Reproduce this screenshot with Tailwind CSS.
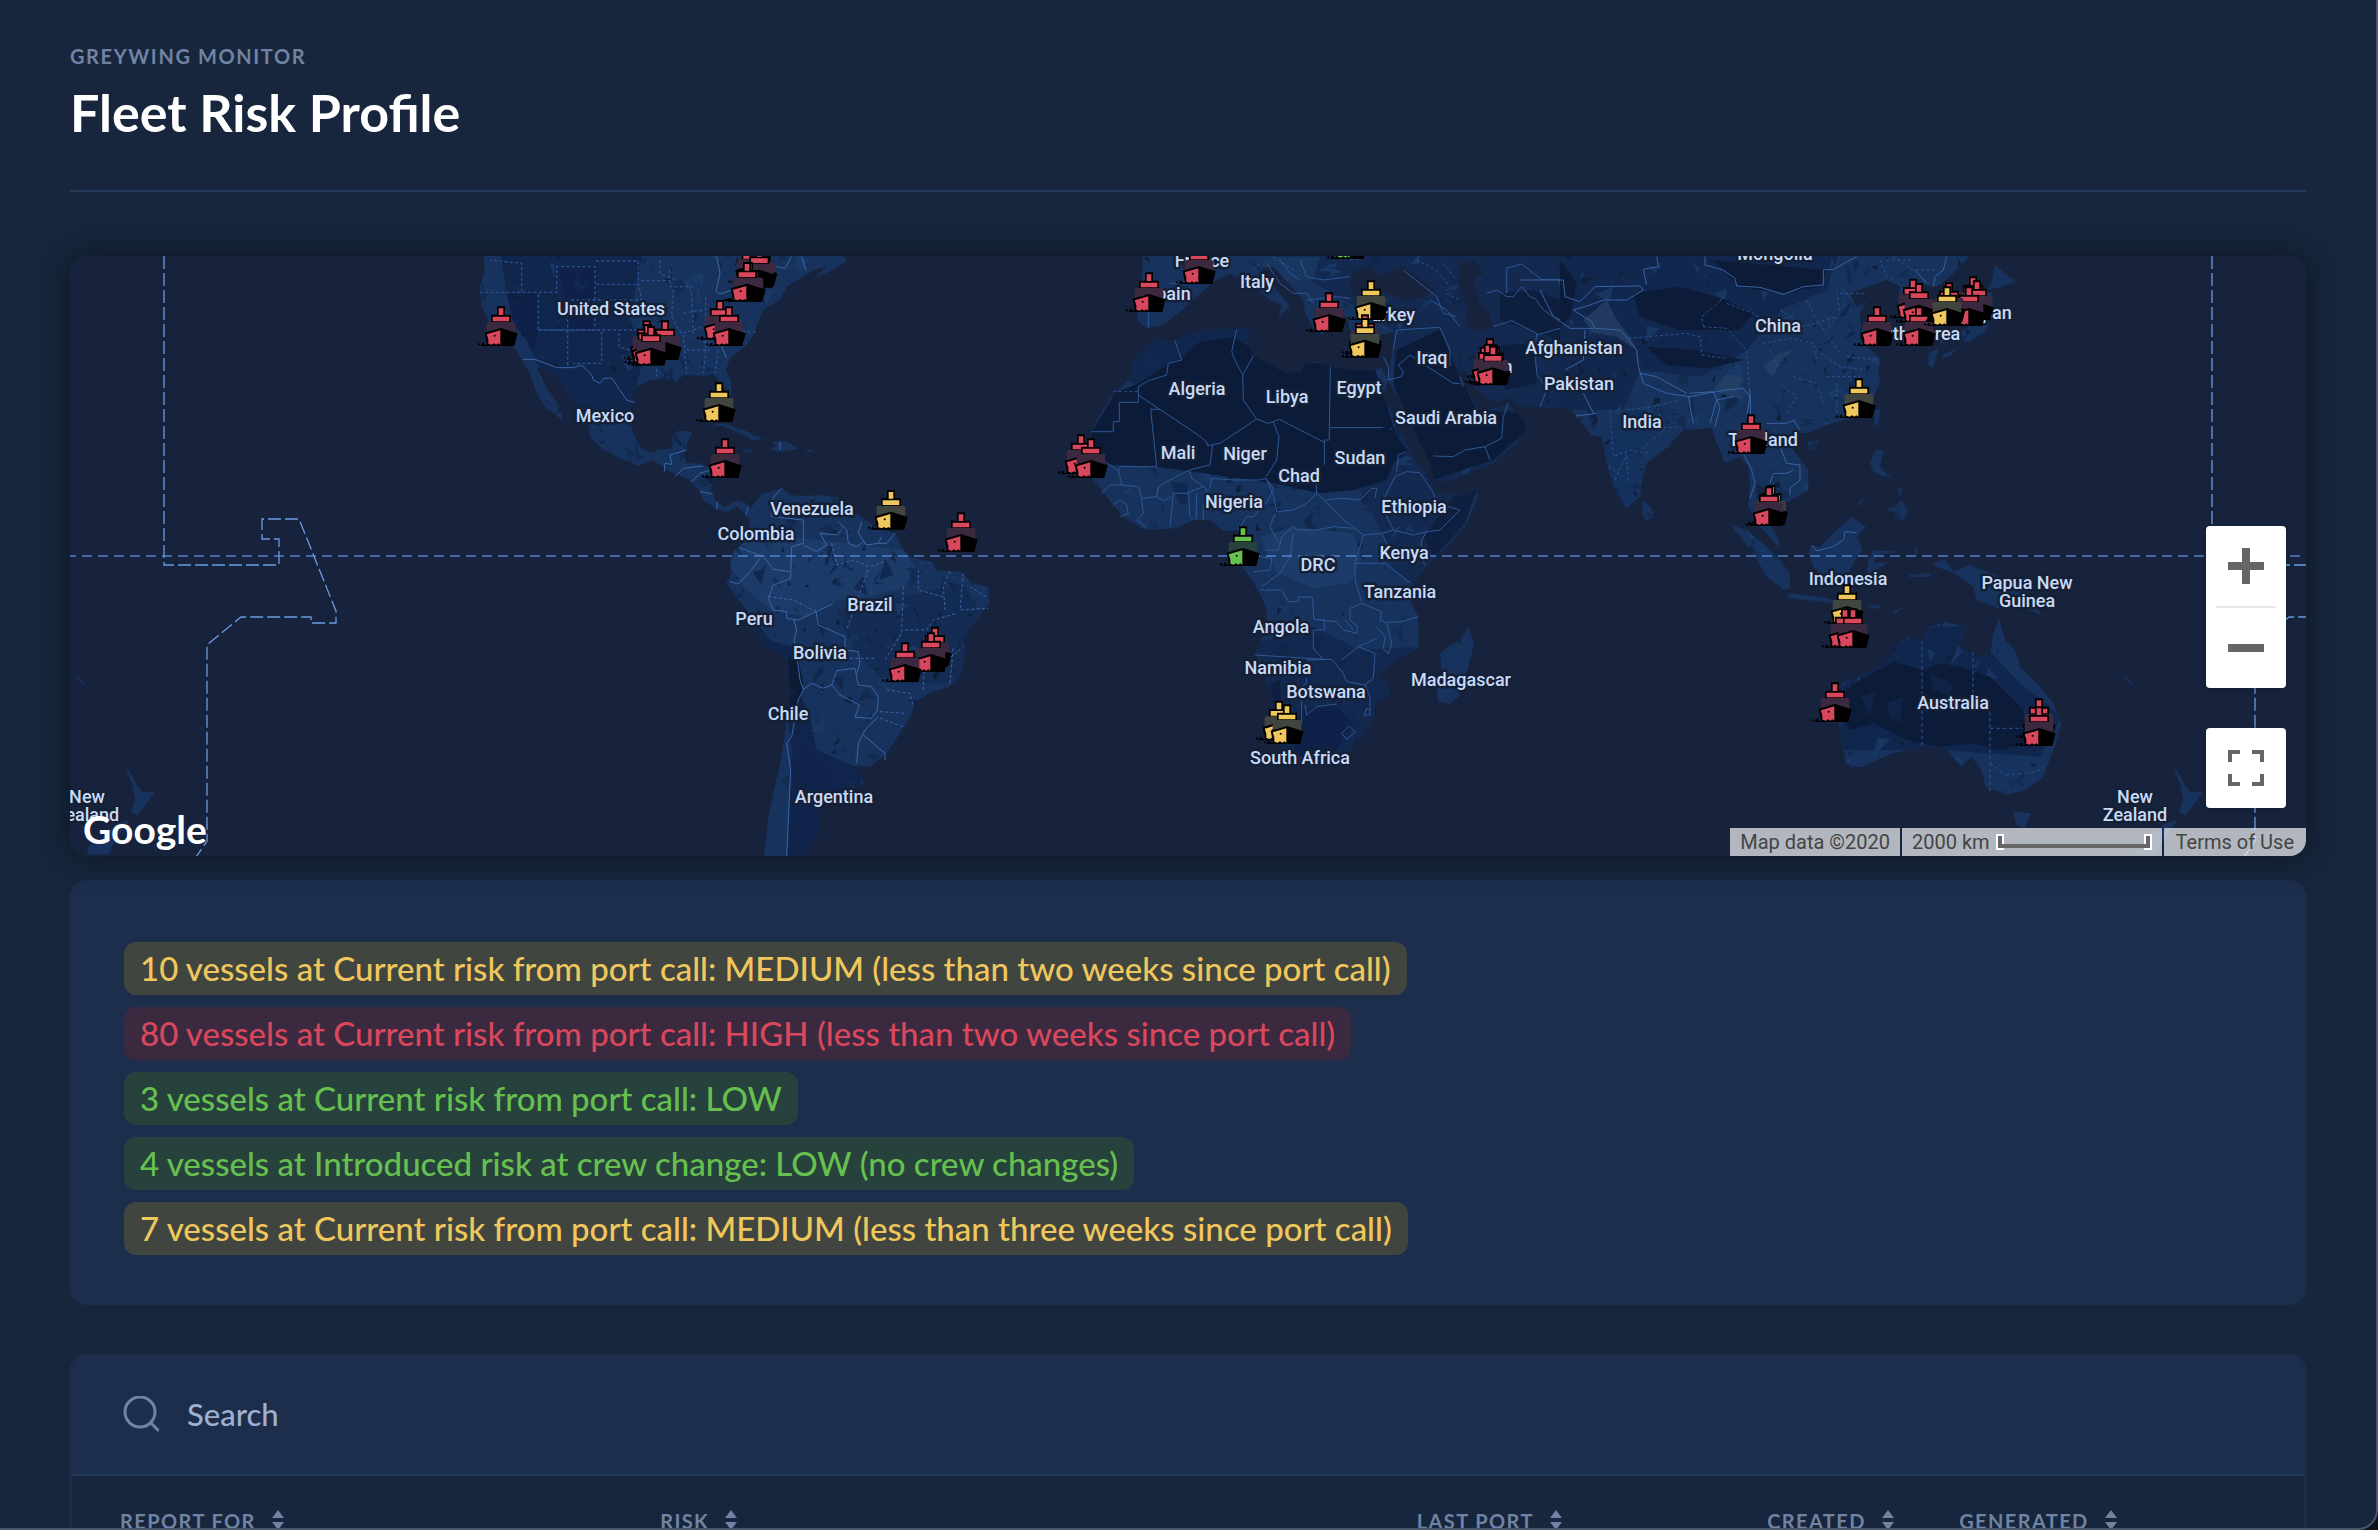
<!DOCTYPE html>
<html lang="en">
  <head>
    <meta charset="UTF-8" />
    <meta name="viewport" content="width=device-width, initial-scale=1.0" />
    <title>Fleet Risk Profile</title>
    <script src="https://cdn.jsdelivr.net/npm/@tailwindcss/browser@4"></script>
  </head>
  <body class="bg-[#0b121c] font-['Lato','Open_Sans',sans-serif]">
    <div class="h-screen overflow-hidden rounded-br-[20px] border-r-2 border-b-2 border-[#49566b] bg-[#17263c] px-[70px]">
      <header class="border-b-2 border-[#243b5b] pt-[42px] pb-12">
        <p class="text-[20px] leading-7 font-bold tracking-[0.08em] text-[#7183a3] uppercase">Greywing Monitor</p>
        <h1 class="mt-3 text-[52px] leading-[60px] font-bold text-white">Fleet Risk Profile</h1>
      </header>

      <!-- map -->
      <section aria-label="Fleet map" class="relative mt-16 h-[600px] overflow-hidden rounded-2xl bg-[#17233d] shadow-[0_0_32px_#0c1624]">
        <svg class="block h-full w-full" viewBox="0 0 2236 600" preserveAspectRatio="xMidYMid slice">
          <defs>
            <g id="ship">
              <path d="M-12 -119H12V-94H30V-70H-30V-94H-12Z" fill="#000" />
              <path d="M-7 -113H7V-93H-7ZM-25 -88H25V-74H-25Z" fill="currentColor" />
              <rect x="-43" y="-72" width="86" height="60" rx="5" fill="var(--body)" />
              <path d="M-49 -40L0 -54 50 -38 40 0H-62L-58 -4H-42Z" fill="#000" />
              <path d="M-43 -35L-2 -47V-4L-8 -8 -14 -4 -21 -8 -28 -4 -38 -7 -38 -20Z" fill="currentColor" />
              <circle cx="-19" cy="-31" r="3" fill="#000" />
              <circle cx="-66" cy="-5" r="3.500" fill="#000" />
              <circle cx="-54" cy="-6" r="4" fill="#000" />
            </g>
            <path id="land-am" d="M38 0L45 60 30 110 35 170 60 220 75 265 130 290 155 328 180 370 200 430 225 470 280 512 262 460 235 420 215 385 200 350 225 360 265 385 290 430 330 480 355 520 360 560 400 600 450 625 505 648 548 630 600 665 660 690 690 725 700 750 740 778 775 785 800 768 822 790 840 810 830 870 790 905 780 940 785 970 770 1000 795 1040 825 1080 850 1140 890 1190 940 1215 955 1240 960 1335 936 1512 897 1689 882 1818H1005L1050 1737 1044 1677 1134 1632 1182 1596 1158 1548 1200 1550 1250 1510 1290 1450 1322 1400 1335 1355 1390 1325 1430 1315 1470 1280 1485 1220 1490 1150 1520 1110 1558 1060 1555 1010 1510 1000 1470 965 1400 960 1385 935 1330 925 1300 900 1275 850 1215 830 1175 800 1130 770 1110 745 1060 735 1000 738 960 735 935 715 880 730 865 745 842 775 830 760 795 752 765 772 735 750 722 720 728 690 722 655 690 640 650 640 640 610 668 545 625 542 608 560 605 595 565 600 540 610 510 590 490 550 480 510 485 450 500 410 540 390 590 385 620 395 640 375 700 378 730 372 760 405 783 440 785 400 768 360 780 325 820 295 850 260 862 220 880 180 930 150 950 110 1000 80 1030 60 1070 50 1030 85 1085 62 1132 30 1100 0ZM712 530L760 518 820 540 885 568 850 570 800 545 760 528ZM905 575L950 573 985 597 920 605 900 595 920 590ZM818 598H845L850 608 830 606ZM1008 599H1030V605H1010Z" />
            <path id="land-af" d="M285 262L310 275 345 272 375 255 440 240 530 237 567 235 565 280 580 318 620 335 675 370 725 365 735 340 775 335 810 350 870 360 940 360 965 355 985 390 968 440 985 470 1010 520 1030 560 1050 610 1090 660 1115 700 1125 728 1180 730 1255 715 1250 750 1220 820 1180 875 1130 920 1090 960 1060 1000 1055 1060 1075 1100 1075 1190 1020 1225 950 1280 985 1300 988 1335 945 1360 945 1395 900 1470 860 1510 790 1525 720 1540 680 1545 660 1510 655 1470 635 1390 632 1330 600 1250 590 1200 622 1130 620 1080 600 1030 575 990 545 950 525 900 550 850 530 842 490 843 450 810 400 810 350 835 255 840 190 800 155 760 125 720 100 690 90 640 85 600 95 545 110 510 160 430 215 385 215 340 250 300ZM1225 1130L1243 1180 1225 1250 1195 1340 1170 1362 1135 1355 1130 1320 1145 1270 1140 1210 1180 1180 1205 1165ZM250 0L245 100 235 150 230 210 260 235 310 225 355 190 400 150 460 95 510 72 545 85 580 110 630 150 665 165 655 205 690 170 655 125 625 90 605 55 640 50 690 105 730 150 735 190 760 235 790 255 800 215 830 190 860 200 870 240 900 250 960 255 1000 245 1000 290 990 350 985 390 1000 420 1040 500 1080 580 1110 640 1125 700 1170 690 1300 640 1370 580 1405 525 1380 500 1345 460 1310 475 1260 480 1245 460 1210 400 1190 370 1215 360 1250 420 1310 460 1345 440 1380 470 1540 475V0Z" />
            <path id="land-as" d="M60 0V475H90L110 500 155 555 185 560 200 640 225 720 260 775 300 740 308 680 320 640 385 590 430 540 515 535 530 580 555 640 600 620 625 650 630 700 625 770 660 830 720 895 712 860 680 800 650 740V700L690 725 720 760 745 755 805 720V660L760 600 735 570 760 545 800 550 860 525 930 505 1000 440 1020 400 1015 360 1020 330 970 270 965 235 960 190 985 150 950 170 930 130 980 110 1040 90 1080 110 1075 150 1090 200 1110 260 1150 250 1140 180 1110 130 1130 100 1190 110 1230 80 1280 30 1300 0ZM1365 45L1400 75 1428 95 1385 110 1340 120 1355 95ZM1355 125L1360 170 1340 240 1290 275 1200 280V265L1280 235 1320 190 1340 130ZM1165 310L1195 295 1180 355 1165 345ZM1205 315L1250 295 1235 315 1210 325ZM1005 480L1022 475 1015 520 1000 530ZM805 575L835 570 820 600 803 595ZM1005 600H1030L1020 650 1055 685 1030 680 1000 665 990 640ZM950 765L985 725 960 765ZM1070 705L1085 720 1080 740ZM1035 780L1065 770 1085 750 1104 785 1085 812 1065 805V785ZM310 752L335 775 340 800 318 812 306 790ZM570 823L620 840 680 890 720 930 750 970V1015L730 1018 680 980 640 910 600 860ZM740 1030L800 1035 870 1045 890 1060 800 1050 750 1045ZM935 800L978 830 950 860 968 900 940 940 920 985 850 980 820 950 805 905 815 885 840 890 880 850ZM1000 900L1075 905 1010 915 1000 940 1045 935 1010 960 1020 1000 980 975 985 930ZM1125 885L1135 910 1125 915ZM1105 975L1170 970 1175 980 1110 982ZM985 1065L1030 1068 1000 1078ZM1055 1085L1100 1068 1065 1092ZM1180 940L1215 928 1240 965 1290 945 1370 975 1450 1010 1505 1095 1440 1070 1370 1075 1310 1050 1300 1010 1240 970 1190 950ZM905 1300L960 1275 1025 1250 1060 1190 1105 1160 1140 1180 1170 1130 1215 1115 1278 1130 1260 1190 1310 1220 1350 1215 1360 1150 1378 1105 1395 1170 1425 1200 1440 1250 1500 1310 1540 1360 1564 1420 1545 1490 1509 1580 1460 1620 1398 1635 1337 1610 1325 1560 1294 1520 1264 1550 1215 1495 1147 1490 1056 1510 970 1550 921 1550 909 1490 896 1410ZM1419 1685L1474 1690 1453 1735 1429 1725Z" />
            <path id="land-nz" d="M1900 1555L1915 1565 1931 1600 1950 1625 1989 1625 1965 1660 1937 1695 1918 1685 1930 1650 1920 1600ZM1913 1710L1876 1720 1830 1765 1784 1790 1790 1815 1851 1812 1870 1770ZM1747 1275L1788 1307 1765 1298Z" />
            <path id="dateline" d="M94 0V309H209V283H192V263H229L266 355V367H241V361H171L137 389V585L124 604" />
            <clipPath id="clip-am"><use href="#land-am" /></clipPath>
            <clipPath id="clip-af"><use href="#land-af" /></clipPath>
            <clipPath id="clip-as"><use href="#land-as" /></clipPath>
          </defs>

          <!-- Americas -->
          <g transform="translate(400 -6) scale(0.33333)">
            <use href="#land-am" fill="#17325c" />
            <g clip-path="url(#clip-am)">
              <path d="M90 0L110 130 150 230 200 340 330 480 480 500 500 400 520 330 480 200 520 0Z" fill="#11264d" />
              <path d="M110 130H205V235L190 300 130 220ZM265 50H380V240H290V160Z" fill="#0f2148" />
              <path d="M1100 1080L1300 1040 1480 1000 1540 1100 1480 1300 1250 1300 1150 1200Z" fill="#142b54" />
              <path d="M800 880L960 860 1300 900 1340 960 1300 1010 1200 1040 1100 1050 1000 1100 900 1080 830 1020 780 950Z" fill="#1c3b69" />
              <path d="M770 1000L830 1080 900 1170 965 1190 990 1330 1020 1400 1040 1500 1180 1560 1160 1650 1060 1818H950L965 1500 930 1220 850 1170Z" fill="#11244c" />
              <path d="M955 1220L985 1230 1000 1300 985 1400 958 1380Z" fill="#0d1a34" />
              <g data-terrain="3 10 1550 10 1800 900"></g>
              <path d="M990 1500L1040 1520 1110 1660 1040 1818H960Z" fill="#10234b" />
            </g>
            <g fill="none" stroke="#3c66a8" stroke-width="3" stroke-linejoin="round">
              <path d="M157 328H195L260 353H310L335 345 365 375 370 390 390 400 402 385 425 384 470 450 495 458M740 20L750 70 738 125 750 132 800 115M995 20L1008 62M920 50L945 55 965 20M755 290L770 325M583 665L585 640 605 643 600 615 650 600M615 680L640 655 700 648M664 695L690 670 722 660M690 725L728 732M740 778L742 755M828 795L835 772" />
              <path d="M935 715L908 745 905 800 1000 810V880L965 890 962 985 910 1005 895 1045 910 1080 950 1085 950 1105 985 1110 1038 1085 1090 1060M808 893L880 920 910 958 960 965M870 925L840 965 805 1002 780 995M1038 1085L1045 1125 1125 1160V1200L1165 1205 1170 1240 1160 1270M972 1110L980 1140 972 1170 985 1250 990 1290 1000 1318 1025 1300 1060 1315 1085 1305 1100 1262 1155 1255 1165 1305 1205 1310 1225 1340 1222 1380 1205 1405 1155 1402 1168 1365 1110 1335 1085 1305M1225 1400L1185 1440 1165 1480 1160 1540M1180 1455L1245 1510V1530M1000 1320L985 1350 965 1460 950 1480 962 1560 950 1818M1105 815L1130 840 1135 880 1160 890 1180 875 1190 885 1225 880 1235 860M1050 850L1100 855 1115 840M1050 850L1070 885 1040 905 1000 885M1175 815L1165 850 1190 885M1275 850L1250 880 1225 880M930 575V600" />
              <path stroke-width="4" stroke="#2c5190" stroke-dasharray="9 7" d="M30 127H260V50H375V240H205V127M155 125V40L60 30M293 160V350M205 240H510M395 245V340H310M447 250V290L480 300M378 33H505V100L515 150H293M378 103H500M513 92H600M600 60V110H670M570 30V70L620 90M610 120L605 200 640 260 650 370M665 130L670 260M707 140V300L700 370M745 300L735 370M650 300H720M700 278L830 280M720 245H860M640 250L700 230M755 290L800 240M560 340V380M640 190L700 180" />
              <path stroke-dasharray="9 7" d="M895 1040L970 1050 1040 1085M1195 960L1165 1040 1130 1140M1300 1010L1295 1150 1245 1230M1345 960V1020L1420 1040M1440 965L1420 1010 1425 1080M1480 970L1470 1080 1555 1075M1500 1010L1555 1045M1305 1140H1370L1390 1110 1460 1090M1085 880L1100 945 1150 930 1200 950 1240 935M1360 1320V1270L1420 1240 1480 1190M1250 1320L1320 1330 1330 1370M1230 1385L1310 1390M1230 1405L1300 1430M1140 1225H1220M1440 1300L1450 1190" />
            </g>
          </g>

          <!-- Europe, Africa and the Middle East -->
          <g transform="translate(990 -6) scale(0.33333)">
            <use href="#land-af" fill="#17325c" />
            <g clip-path="url(#clip-af)">
              <path d="M200 0H1600V730H1000L1000 240 600 0Z" fill="#13294f" />
              <path d="M210 340L290 250 600 230V400H210Z" fill="#11264d" />
              <path d="M900 720L1040 620 1130 700 1260 700 1180 900 1060 1000 1000 960 960 840Z" fill="#13294f" />
              <path d="M590 1180L760 1130 900 1200 1060 1190 1000 1300 900 1520H660Z" fill="#12284f" />
              <path d="M720 1380L820 1360 880 1420 830 1500 700 1520Z" fill="#0f2148" />
              <g data-terrain="11 10 1540 10 1540 420"></g>
              <path d="M80 640L95 545 165 430 235 400 330 340 370 320 420 275 520 262 600 310 675 365 735 335 945 358 985 480 1010 560 1045 605 1000 640 980 690 880 720 780 730 640 700 400 665 290 650Z" fill="#0b1b38" />
              <path d="M1000 400L1010 300 1140 240 1200 380 1250 480 1390 490 1400 540 1300 630 1120 690Z" fill="#0b1b38" />
              <path d="M1320 130L1420 120 1550 170V290L1440 250 1320 210ZM1250 290L1420 280 1430 400 1340 420Z" fill="#0d1e3e" />
              <path d="M1180 740L1250 720 1215 820 1120 920 1090 860Z" fill="#0e1f40" />
              <path d="M632 1300L660 1290 665 1400 640 1390Z" fill="#0e1f40" />
              <path d="M600 860L700 830 880 850 905 930 870 1000 760 1015 650 970Z" fill="#1c3b69" />
              <path d="M640 100L760 90 780 20 600 20Z" fill="#193660" />
              <path d="M865 110L880 60 930 50 960 75 1000 60 1030 50 1070 80 1120 115 1100 140 1040 150 960 125 890 145ZM1200 40L1240 30 1270 70 1240 90 1255 150 1290 190 1300 235 1260 245 1215 225 1225 170 1195 110Z" fill="#17233d" />
              <path d="M1215 700L1245 718 1225 735 1130 730 1100 690Z" fill="#17233d" opacity="0.6" />
            </g>
            <g fill="none" stroke="#2f5796" stroke-width="3" stroke-linejoin="round">
              <path d="M345 272L365 330 325 340 320 375 265 392 235 410V457H178V515H160V545H95M235 435L410 552 440 575 442 587 480 580 590 507 625 520 658 508 793 577M530 237L515 305 525 330 548 375 550 450 590 507M580 318L548 375M811 350L808 533H970M808 533V570H793V645M272 478L290 650H183L175 662 135 635M272 478H300M640 515L657 560 650 630 618 680M458 585L450 645 388 660 330 690 295 710 290 740 245 745 235 710 185 705 175 660M388 660L395 685 435 712 445 740 430 760V808M450 715L455 685 520 690 600 690 618 685 640 715 625 750 580 800 560 800 535 840M385 730L390 800 400 810M410 730L408 810M340 730L330 830M340 730H380L430 710M295 710L290 740 310 752 335 740M160 765L180 750 200 765 205 790 180 800M245 745L250 790 230 810 257 830M125 730L150 705H185M618 685L640 735 650 785 700 780 740 760 770 730 793 750 850 745 900 750 935 715 950 715 945 745M770 730L768 700 780 690M793 750L850 810 880 830 910 855 900 890 885 940 885 990 905 1055M645 790L630 830 660 885 655 900 610 900M700 830L710 840 770 840 820 830 880 835M700 830L665 860 660 885M700 850L690 920 660 970 605 1010M600 1020H665L685 1055 715 1055V1040L757 1042 762 1108 793 1110V1140H760V1195L790 1228 585 1215M762 1108L830 1115 850 1140 890 1150 893 1130 870 1110V1075L905 1060 965 1085 960 1110 980 1120 995 1180 985 1212 970 1195 975 1160 950 1130M980 1117L1025 1115 1075 1100M895 1190L950 1165M845 1230L895 1190 945 1210 940 1285 915 1305 860 1295 850 1270 815 1228 740 1230M740 1285V1300L725 1310V1420M735 1365L740 1395 770 1370 830 1362M915 1305L930 1340V1395L912 1395 920 1375 930 1380M845 1450L868 1428 885 1445 860 1468ZM885 940H975L1050 998M910 855L965 850 1000 840 1060 855 1100 845 1085 870 1082 920 1095 945M965 850L980 880 970 935M1000 838L970 780 975 740 1005 680 1040 665 1080 668 1118 725M1010 665L1015 615 1040 605M1118 725L1130 760 1200 780 1140 840 1100 845M855 1110L880 1140M580 965L630 960 635 925 600 920" />
              <path d="M985 390L1025 380 1030 365 1015 345 1050 315 1110 355 1180 400 1200 400M970 320L985 350 985 390M1000 300L1010 240 1140 232 1170 300 1170 350M1340 130V55L1385 42 1420 70 1445 88H1495L1512 130 1566 135M1280 130L1310 120 1340 140 1360 140 1385 110 1410 140 1425 145 1450 180 1480 200 1525 220 1500 235 1430 255M1300 230L1355 212 1430 250 1425 300 1430 370 1460 420 1440 470M1525 220L1555 235M1345 460L1330 500 1325 565 1275 590 1290 630M1275 590L1215 600 1180 620 1120 618M1200 380L1210 410M620 40L660 100 700 130 740 130 760 160M720 30L740 80 790 90 870 80M660 30L690 70 720 90M740 150L830 140 870 145M1030 60L1080 100 1130 140 1150 190 1190 200M1110 150L1160 180 1200 230M265 185V235M400 100H330" />
              <path stroke-dasharray="9 7" stroke="#2c5190" d="M160 425H235M990 540L1040 480M640 20L700 60M1070 30L1130 60 1170 110M1150 40L1190 90M1160 130L1200 150M580 60L600 40M260 120H330M870 30L910 25" />
            </g>
          </g>

          <!-- Asia and Oceania -->
          <g transform="translate(1470 -6) scale(0.33333)">
            <use href="#land-as" fill="#17325c" />
            <g clip-path="url(#clip-as)">
              <path d="M60 0H900L860 120 720 180 620 300 560 340 480 380 300 360 250 480 60 480Z" fill="#12274e" />
              <path d="M905 1310L1060 1190 1180 1130 1280 1130 1440 1300 1564 1400 1500 1520 1200 1500H900Z" fill="#11264d" />
              <path d="M180 560L260 480 400 480 300 620 280 760H220Z" fill="#14305c" />
              <g data-terrain="23 60 1320 10 900 420"></g>
              <g data-terrain="31 900 1560 1120 1640 90"></g>
              <path d="M280 130L420 110 560 150 640 190 600 240 420 240 300 200ZM520 30L740 50 860 60 840 110 720 130 600 110ZM320 290L470 300 610 330 500 355 380 345ZM60 30L110 100 90 200 60 230Z" fill="#0b1b38" />
              <path d="M960 1290L1060 1235 1150 1260 1200 1240 1260 1250 1350 1280 1450 1380 1460 1480 1380 1500 1300 1480 1200 1490 1100 1470 1000 1420 930 1440 905 1400 920 1320Z" fill="#0b1b38" />
              <path d="M520 420L560 370 610 385 590 420 610 450 570 440ZM670 350L720 310 760 300 720 340 700 380ZM130 210L200 150 230 210 270 260 290 300 230 260 160 250Z" fill="#2a4368" opacity="0.7" />
              <path d="M1170 1270L1240 1300 1230 1340 1180 1320ZM1040 1360L1090 1340 1080 1420 1050 1400ZM960 1340L1010 1320 990 1400Z" fill="#11264d" opacity="0.7" />
            </g>
            <g fill="none" stroke="#3963a4" stroke-width="3" stroke-linejoin="round">
              <path d="M-60 90H70L75 140 120 155 165 110 300 108 310 120 260 150 190 150 150 165 100 180 155 215 165 235 240 240 265 270 290 300 295 350 310 400 380 430 450 440 500 430 560 420 610 415 630 440 620 500M310 60L320 105M350 20L355 50 310 58M495 20V45L550 60 585 85 590 108 660 112 730 133 790 110 850 105V60L880 58 950 20M0 120L40 200 90 235 160 235M135 240L130 330 75 360M300 370L350 380 440 430M445 440L460 520M450 430L520 425 540 470 525 530M108 498L170 490M160 490L130 430M630 420L632 500M680 520L740 520 765 510M680 560L720 590 740 640 780 645V690L750 715V735M690 700L700 670 740 670 760 660M610 610L635 660 645 700 630 745M510 520L530 450 580 440M760 510L780 540M815 885L830 903 880 890 910 870 915 845 950 848M1220 20L1210 60 1185 80 1180 110M1125 60L1160 100" />
              <path stroke="#2c5190" stroke-dasharray="9 7" d="M265 265L440 250 480 260 485 315 560 325M490 230L485 200 545 150M490 230L560 235 620 300 630 440M560 160L640 190 700 230M540 150L555 140M670 280L750 265 820 280 830 330M720 180L790 230 890 200M800 150L830 210 900 310M890 125L900 190 860 240M830 300L900 350 980 360M760 380L830 400 850 460M720 400L770 440 740 490M890 400V500M900 130H970M1020 30L1040 80 1060 90M1060 20L1120 60 1190 60M690 300L720 360M210 480L220 620 270 600 330 610M260 480L340 470 420 450M350 460L370 540 300 600M225 690L260 610 265 700M205 650L250 680M290 540L410 530M1040 30H1120M920 320L1010 330M860 380L960 380" />
              <path stroke-width="4" stroke="#234a86" stroke-dasharray="11 8" d="M1146 1172V1490M1299 1205V1378M1350 1385V1625M1350 1435H1450M1350 1540L1400 1575 1490 1565 1510 1550" />
            </g>
            <use href="#land-nz" fill="#17325c" />
            <use href="#land-nz" x="-6144" fill="#17325c" />
          </g>

          <!-- equator and date line -->
          <g fill="none">
            <path d="M-4 300H2240" stroke="#5a8ee0" stroke-opacity="0.65" stroke-width="2" stroke-dasharray="10 6" />
            <g stroke="#6c9ae2" stroke-width="1.300" stroke-dasharray="13 4">
              <use href="#dateline" />
              <use href="#dateline" x="2048" />
            </g>
          </g>

          <!-- country names -->
          <g class="font-['Roboto',sans-serif] text-[18px] font-medium" fill="#c9daf6" stroke="#142036" stroke-width="5" stroke-linejoin="round" paint-order="stroke" text-anchor="middle">
            <text x="541" y="59">United States</text>
            <text x="535" y="166">Mexico</text>
            <text x="742" y="259">Venezuela</text>
            <text x="686" y="284">Colombia</text>
            <text x="684" y="369">Peru</text>
            <text x="800" y="355">Brazil</text>
            <text x="750" y="403">Bolivia</text>
            <text x="718" y="464">Chile</text>
            <text x="764" y="547">Argentina</text>
            <text x="1132" y="11">France</text>
            <text x="1187" y="32">Italy</text>
            <text x="1098" y="44">Spain</text>
            <text x="1318" y="65">Turkey</text>
            <text x="1362" y="108">Iraq</text>
            <text x="1427" y="117">Iran</text>
            <text x="1127" y="139">Algeria</text>
            <text x="1217" y="147">Libya</text>
            <text x="1289" y="138">Egypt</text>
            <text x="1376" y="168">Saudi Arabia</text>
            <text x="1108" y="203">Mali</text>
            <text x="1175" y="204">Niger</text>
            <text x="1290" y="208">Sudan</text>
            <text x="1229" y="226">Chad</text>
            <text x="1164" y="252">Nigeria</text>
            <text x="1344" y="257">Ethiopia</text>
            <text x="1334" y="303">Kenya</text>
            <text x="1248" y="315">DRC</text>
            <text x="1330" y="342">Tanzania</text>
            <text x="1211" y="377">Angola</text>
            <text x="1208" y="418">Namibia</text>
            <text x="1256" y="442">Botswana</text>
            <text x="1391" y="430">Madagascar</text>
            <text x="1230" y="508">South Africa</text>
            <text x="1705" y="4">Mongolia</text>
            <text x="1708" y="76">China</text>
            <text x="1504" y="98">Afghanistan</text>
            <text x="1509" y="134">Pakistan</text>
            <text x="1572" y="172">India</text>
            <text x="1693" y="190">Thailand</text>
            <text x="1841" y="84">South Korea</text>
            <text x="1917" y="63">Japan</text>
            <text x="1778" y="329">Indonesia</text>
            <text x="1957" y="333">Papua New<tspan x="1957" dy="18">Guinea</tspan></text>
            <text x="1883" y="453">Australia</text>
            <text x="2065" y="547">New<tspan x="2065" dy="18">Zealand</tspan></text>
            <text x="17" y="547">New<tspan x="17" dy="18">Zealand</tspan></text>
          </g>

          <!-- vessels: red is high risk, yellow medium, green low -->
          <g transform="translate(400 -6) scale(0.33333)" class="text-[#d8475c] [--body:#3b2940]">
            <use href="#ship" x="93" y="288" />
            <use href="#ship" x="530" y="330" />
            <use href="#ship" x="585" y="330" />
            <use href="#ship" x="533" y="341" />
            <use href="#ship" x="543" y="347" />
            <use href="#ship" x="750" y="269" />
            <use href="#ship" x="777" y="288" />
            <use href="#ship" x="845" y="100" />
            <use href="#ship" x="872" y="108" />
            <use href="#ship" x="868" y="113" />
            <use href="#ship" x="837" y="155" />
            <use href="#ship" x="831" y="155" />
            <use href="#ship" x="765" y="684" />
            <use href="#ship" x="1473" y="906" />
            <use href="#ship" x="1395" y="1249" />
            <use href="#ship" x="1383" y="1266" />
            <use href="#ship" x="1305" y="1296" />
            <g class="text-[#f0c75c] [--body:#41453f]">
              <use href="#ship" x="747" y="516" />
              <use href="#ship" x="1263" y="839" />
            </g>
          </g>
          <g transform="translate(990 -6) scale(0.33333)" class="text-[#d8475c] [--body:#3b2940]">
            <use href="#ship" x="267" y="186" />
            <use href="#ship" x="417" y="102" />
            <use href="#ship" x="807" y="246" />
            <use href="#ship" x="63" y="672" />
            <use href="#ship" x="93" y="684" />
            <use href="#ship" x="1290" y="384" />
            <use href="#ship" x="1284" y="400" />
            <use href="#ship" x="1302" y="402" />
            <use href="#ship" x="1299" y="406" />
            <g class="text-[#f0c75c] [--body:#41453f]">
              <use href="#ship" x="933" y="210" />
            </g>
            <use href="#ship" x="915" y="312" />
            <g class="text-[#f0c75c] [--body:#41453f]">
              <use href="#ship" x="915" y="323" />
              <use href="#ship" x="657" y="1471" />
              <use href="#ship" x="681" y="1482" />
            </g>
            <g class="text-[#66c04f] [--body:#27423c]">
              <use href="#ship" x="871" y="27" />
              <use href="#ship" x="549" y="948" />
            </g>
          </g>
          <g transform="translate(1470 -6) scale(0.33333)" class="text-[#d8475c] [--body:#3b2940]">
            <use href="#ship" x="1119" y="205" />
            <use href="#ship" x="1137" y="218" />
            <use href="#ship" x="1011" y="288" />
            <use href="#ship" x="1137" y="288" />
            <use href="#ship" x="1299" y="198" />
            <use href="#ship" x="1311" y="210" />
            <use href="#ship" x="1287" y="228" />
            <use href="#ship" x="1227" y="216" />
            <use href="#ship" x="633" y="612" />
            <use href="#ship" x="885" y="1416" />
            <use href="#ship" x="1497" y="1464" />
            <use href="#ship" x="1497" y="1488" />
            <g class="text-[#f0c75c] [--body:#41453f]">
              <use href="#ship" x="1221" y="228" />
              <use href="#ship" x="957" y="504" />
              <use href="#ship" x="694" y="824" />
              <use href="#ship" x="921" y="1122" />
            </g>
            <use href="#ship" x="687" y="828" />
            <use href="#ship" x="915" y="1194" />
            <use href="#ship" x="939" y="1194" />
          </g>
        </svg>

        <a href="#" class="absolute bottom-0 left-[13px] text-[39px] leading-[54px] font-bold text-white">Google</a>

        <div class="absolute right-5 bottom-12 flex flex-col gap-10">
          <div class="flex w-20 flex-col items-center rounded bg-white shadow-md">
            <button aria-label="Zoom in" class="flex h-20 w-20 items-center justify-center">
              <svg class="h-9 w-9" viewBox="0 0 36 36"><path d="M14 0h8v14h14v8H22v14h-8V22H0v-8h14z" fill="#666" /></svg>
            </button>
            <div class="h-[2px] w-[60px] bg-[#e6e6e6]"></div>
            <button aria-label="Zoom out" class="flex h-20 w-20 items-center justify-center">
              <svg class="h-9 w-9" viewBox="0 0 36 36"><path d="M0 14h36v8H0z" fill="#666" /></svg>
            </button>
          </div>
          <button aria-label="Toggle fullscreen view" class="flex h-20 w-20 items-center justify-center rounded bg-white shadow-md">
            <svg class="h-9 w-9" viewBox="0 0 36 36"><path d="M0 0h12v4H4v8H0zM24 0h12v12h-4V4h-8zM0 24h4v8h8v4H0zM32 24h4v12H24v-4h8z" fill="#666" /></svg>
          </button>
        </div>

        <div class="absolute right-0 bottom-0 flex h-7 gap-[2px] font-['Roboto',sans-serif] text-[20px] leading-7 text-[#444]">
          <span class="bg-[#f5f5f5]/70 px-[10px]">Map data ©2020</span>
          <button class="flex items-center gap-[6px] bg-[#f5f5f5]/70 px-[10px]">
            2000 km
            <svg class="h-4 w-[156px]" viewBox="0 0 156 16">
              <path d="M0 0h8v10h140V0h8v16H0z" fill="#fff" />
              <path d="M2 2h4v8h144V2h4v12H2z" fill="#666" />
              <path d="M8 0h140v10H8zM8 14h140v2H8z" fill="#b1b5bd" />
            </svg>
          </button>
          <a href="#" class="bg-[#f5f5f5]/70 px-3">Terms of Use</a>
        </div>
      </section>

      <!-- risk summary -->
      <section class="mt-6 rounded-2xl bg-[#1c2e4c] px-[54px] pt-[62px] pb-[50px]">
        <ul class="flex flex-col items-start gap-3 text-[33px] leading-[53px] font-medium">
          <li class="rounded-xl bg-[#41453f] px-4 text-[#f0c75c]">10 vessels at Current risk from port call: MEDIUM (less than two weeks since port call)</li>
          <li class="rounded-xl bg-[#3b2940] px-4 text-[#d8475c]">80 vessels at Current risk from port call: HIGH (less than two weeks since port call)</li>
          <li class="rounded-xl bg-[#27423c] px-4 text-[#66c04f]">3 vessels at Current risk from port call: LOW</li>
          <li class="rounded-xl bg-[#27423c] px-4 text-[#66c04f]">4 vessels at Introduced risk at crew change: LOW (no crew changes)</li>
          <li class="rounded-xl bg-[#41453f] px-4 text-[#f0c75c]">7 vessels at Current risk from port call: MEDIUM (less than three weeks since port call)</li>
        </ul>
      </section>

      <!-- reports -->
      <section class="mt-[49px] overflow-hidden rounded-t-2xl border-x-2 border-[#1c2e4c]">
        <label class="flex h-[122px] items-center gap-7 border-b-2 border-[#243b5b] bg-[#1c2e4c] px-[51px]">
          <svg class="h-9 w-9" viewBox="0 0 36 36" fill="none" stroke="#7183a3" stroke-width="3" stroke-linecap="round">
            <circle cx="17" cy="16" r="15" />
            <path d="M28 27l7 7" />
          </svg>
          <input type="search" placeholder="Search" aria-label="Search" class="grow bg-transparent text-[31px] font-medium text-[#9fb1d1] outline-none placeholder:text-[#9fb1d1]" />
        </label>
        <table class="w-full table-fixed text-left text-[20px] leading-7 text-[#7183a3]">
          <colgroup>
            <col class="w-[24.2%]" />
            <col class="w-[33.9%]" />
            <col class="w-[15.7%]" />
            <col class="w-[8.6%]" />
            <col />
          </colgroup>
          <thead>
            <tr id="columns">
              <th class="pt-[31px] pl-12"><button class="flex items-center gap-4 font-bold tracking-[0.07em] uppercase">Report for</button></th>
              <th class="pt-[31px] pl-12"><button class="flex items-center gap-4 font-bold tracking-[0.07em] uppercase">Risk</button></th>
              <th class="pt-[31px] pl-12"><button class="flex items-center gap-4 font-bold tracking-[0.07em] uppercase">Last port</button></th>
              <th class="pt-[31px] pl-12"><button class="flex items-center gap-4 font-bold tracking-[0.07em] uppercase">Created</button></th>
              <th class="pt-[31px] pl-12"><button class="flex items-center gap-4 font-bold tracking-[0.07em] uppercase">Generated</button></th>
            </tr>
          </thead>
        </table>
      </section>
    </div>

    <script>
      const SVG = "http://www.w3.org/2000/svg";

      // sort arrows
      document.querySelectorAll("#columns button").forEach((button) => {
        const svg = document.createElementNS(SVG, "svg");
        svg.setAttribute("width", 12);
        svg.setAttribute("height", 22);
        const path = document.createElementNS(SVG, "path");
        path.setAttribute("d", "M6 0l6 8H0zM0 12h12l-6 8z");
        path.setAttribute("fill", "currentColor");
        svg.appendChild(path);
        button.appendChild(svg);
      });

      // relief: small shards scattered over the land, "seed x0 x1 y0 y1 count"
      const shades = ["#0f1b30", "#11244a", "#1c3b69", "#13294f", "#0f1b30"];
      document.querySelectorAll("[data-terrain]").forEach((group) => {
        let [seed, x0, x1, y0, y1, count] = group.dataset.terrain.split(" ").map(Number);
        const rand = () => (seed = (seed * 16807) % 2147483647) / 2147483647;
        for (let i = 0; i < 20; i++) rand();
        for (let i = 0; i < count; i++) {
          const x = x0 + rand() * (x1 - x0);
          const y = y0 + rand() * (y1 - y0);
          const shade = Math.floor(rand() * shades.length);
          const size = shades[shade] == "#0f1b30" ? 15 : 36;
          let points = [];
          for (let p = 0; p < 4; p++) {
            points.push(Math.round(x + (rand() - 0.5) * size * 1.6) + "," + Math.round(y + (rand() - 0.5) * size * 2));
          }
          const shard = document.createElementNS(SVG, "polygon");
          shard.setAttribute("points", points.join(" "));
          shard.setAttribute("fill", shades[shade]);
          shard.setAttribute("opacity", "0.8");
          group.appendChild(shard);
        }
      });
    </script>
  </body>
</html>
